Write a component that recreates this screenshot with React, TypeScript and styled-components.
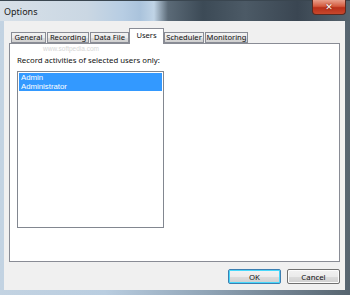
import React from "react";
import styled, { createGlobalStyle } from "styled-components";

const Global = createGlobalStyle`
  html, body { margin: 0; padding: 0; background: #2c3640; }
  body { font-family: "Noto Sans", "Open Sans", sans-serif; }
`;

const Window = styled.div`
  width: 350px;
  height: 295px;
  box-sizing: border-box;
  display: flex;
  flex-direction: column;
  background: linear-gradient(90deg, #c3d3e2 0%, #b9cde0 30%, #8fa3b5 60%, #56646f 100%);
  position: relative;
  overflow: hidden;
`;

const TitleBar = styled.div`
  height: 21px;
  flex: none;
  display: flex;
  align-items: flex-start;
  justify-content: space-between;
  box-sizing: border-box;
  border-top: 1px solid #3a4650;
  background: linear-gradient(
    90deg,
    #d7e0e8 0%,
    #cad7e3 25%,
    #b7cde3 35%,
    #aac3dc 40%,
    #c0d4e6 44%,
    #5b6a77 48%,
    #3c4a56 58%,
    #4c5a66 70%,
    #3a4652 85%,
    #56646e 100%
  );
`;

const Title = styled.span`
  font-family: "Noto Sans", "Open Sans", sans-serif;
  font-size: 9px;
  color: #1a1a1a;
  margin: 5px 0 0 4px;
  line-height: 11px;
`;

const CloseButton = styled.div`
  width: 34px;
  height: 15px;
  margin-right: 4px;
  margin-top: -1px;
  box-sizing: border-box;
  border: 1px solid #5a2a20;
  border-top: none;
  border-radius: 0 0 4px 4px;
  background: linear-gradient(180deg, #e8a08c 0%, #d45a3e 45%, #b8301a 55%, #c8482c 100%);
  display: flex;
  align-items: center;
  justify-content: center;
  color: #fff;
  font-family: "DejaVu Sans", sans-serif;
  font-weight: bold;
  font-size: 9px;
  text-shadow: 0 0 2px #5a1a0a;
`;

const Client = styled.div`
  flex: 1;
  margin: 0 5px 5px 4px;
  background: #f0f0f0;
  display: flex;
  flex-direction: column;
  padding: 7px 5px 0 5px;
  box-sizing: border-box;
`;

const TabRow = styled.div`
  display: flex;
  align-items: flex-end;
  padding-left: 2px;
  height: 15px;
  position: relative;
  z-index: 1;
`;

const Tab = styled.div<{ $active?: boolean; $w: number }>`
  width: ${(p) => p.$w}px;
  height: ${(p) => (p.$active ? 16 : 11)}px;
  box-sizing: border-box;
  border: 1px solid #898c95;
  border-bottom: ${(p) => (p.$active ? "none" : "1px solid #898c95")};
  background: ${(p) => (p.$active ? "#ffffff" : "linear-gradient(180deg, #f2f2f2 0%, #ebebeb 50%, #dddddd 51%, #cfcfcf 100%)")};
  margin-left: ${(p) => (p.$active ? -1 : 0)}px;
  margin-right: ${(p) => (p.$active ? 0 : 1)}px;
  margin-bottom: ${(p) => (p.$active ? -1 : 0)}px;
  display: flex;
  align-items: ${(p) => (p.$active ? "flex-start" : "center")};
  justify-content: center;
  padding-top: ${(p) => (p.$active ? 2 : 0)}px;
  font-size: 7.6px;
  line-height: 9px;
  color: #111;
  white-space: nowrap;
`;

const Panel = styled.div`
  height: 219px;
  box-sizing: border-box;
  border: 1px solid #898c95;
  background: #fff;
  padding: 11px 0 0 7px;
  display: flex;
  flex-direction: column;
  position: relative;
`;

const Watermark = styled.span`
  position: absolute;
  left: 33px;
  top: 1px;
  font-family: "Liberation Sans", sans-serif;
  font-size: 6.5px;
  line-height: 8px;
  color: #d6d6d6;
`;

const Label = styled.div`
  font-size: 7.8px;
  line-height: 10px;
  color: #111;
  height: 16px;
`;

const ListBox = styled.div`
  width: 147px;
  height: 157px;
  box-sizing: border-box;
  border: 1px solid #828790;
  background: #fff;
  padding: 1px 1px;
`;

const Item = styled.div<{ $selected?: boolean }>`
  height: 9px;
  line-height: 9px;
  font-family: "Liberation Sans", sans-serif;
  font-size: 7.8px;
  padding-left: 2px;
  color: ${(p) => (p.$selected ? "#fff" : "#111")};
  background: ${(p) => (p.$selected ? "#3399ff" : "transparent")};
`;

const ButtonRow = styled.div`
  display: flex;
  justify-content: flex-end;
  gap: 6px;
  margin-top: 7px;
`;

const Button = styled.div<{ $default?: boolean }>`
  width: 53px;
  height: 15px;
  box-sizing: border-box;
  border: 1px solid ${(p) => (p.$default ? "#3c7fb1" : "#707070")};
  border-radius: 2px;
  background: linear-gradient(180deg, #f2f2f2 0%, #ebebeb 50%, #dddddd 51%, #cfcfcf 100%);
  box-shadow: ${(p) => (p.$default ? "inset 0 0 0 1px #48d8fb" : "inset 0 0 0 1px #fcfcfc")};
  display: flex;
  align-items: center;
  justify-content: center;
  font-size: 7.8px;
  color: #111;
`;

const tabs: { label: string; w: number; active?: boolean }[] = [
  { label: "General", w: 35 },
  { label: "Recording", w: 42 },
  { label: "Data File", w: 39 },
  { label: "Users", w: 35, active: true },
  { label: "Scheduler", w: 40 },
  { label: "Monitoring", w: 43 },
];

export default function App() {
  return (
    <>
      <Global />
      <Window>
        <TitleBar>
          <Title>Options</Title>
          <CloseButton>✕</CloseButton>
        </TitleBar>
        <Client>
          <TabRow>
            {tabs.map((t) => (
              <Tab key={t.label} $w={t.w} $active={t.active}>
                {t.label}
              </Tab>
            ))}
          </TabRow>
          <Panel>
            <Watermark>www.softpedia.com</Watermark>
            <Label>Record activities of selected users only:</Label>
            <ListBox>
              <Item $selected>Admin</Item>
              <Item $selected>Administrator</Item>
            </ListBox>
          </Panel>
          <ButtonRow>
            <Button $default>OK</Button>
            <Button>Cancel</Button>
          </ButtonRow>
        </Client>
      </Window>
    </>
  );
}
